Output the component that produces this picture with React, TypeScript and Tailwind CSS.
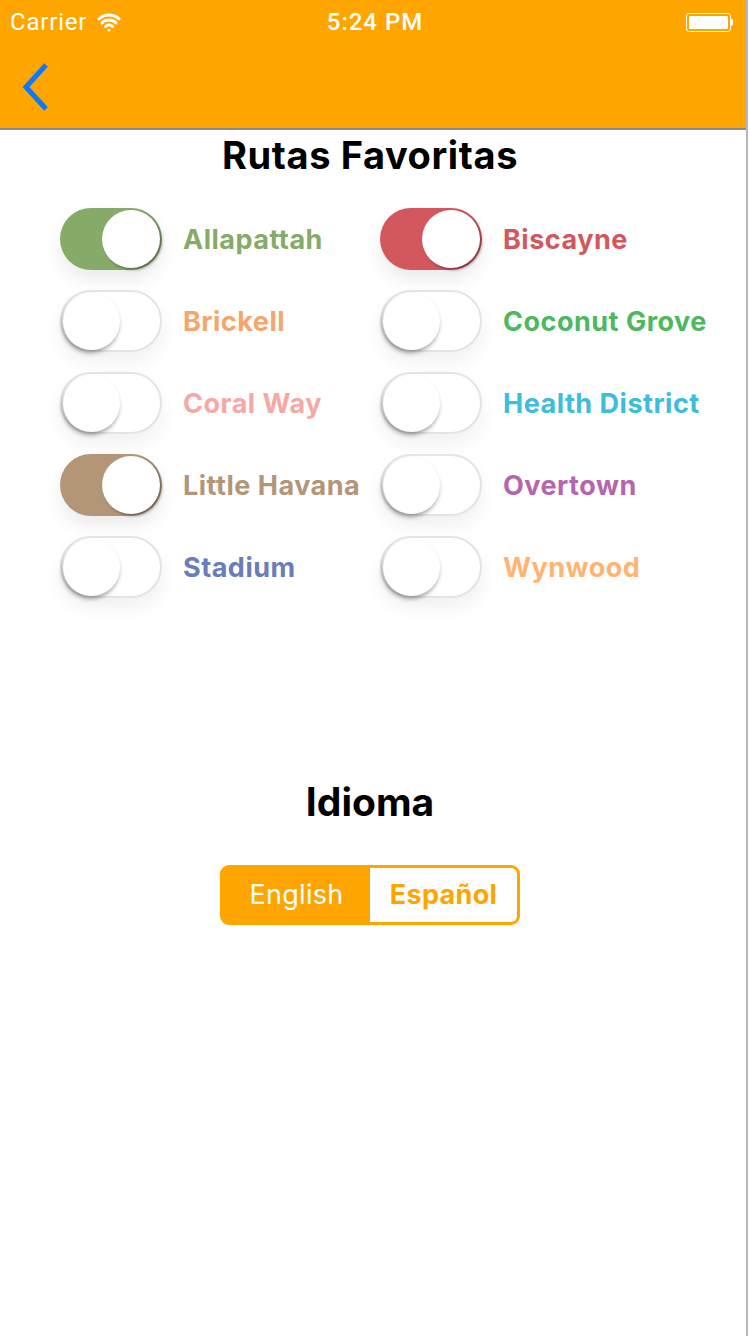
import { Wifi } from 'lucide-react';

type Route = { name: string; color: string; on?: boolean };

const routes: Route[] = [
  { name: 'Allapattah',      color: '#86ab69', on: true },
  { name: 'Biscayne',        color: '#d2585e', on: true },
  { name: 'Brickell',        color: '#f6a66b' },
  { name: 'Coconut Grove',   color: '#4db85f' },
  { name: 'Coral Way',       color: '#f6a8a4' },
  { name: 'Health District', color: '#3dbcdc' },
  { name: 'Little Havana',   color: '#b39578', on: true },
  { name: 'Overtown',        color: '#b565ad' },
  { name: 'Stadium',         color: '#6a7db8' },
  { name: 'Wynwood',         color: '#ffb571' },
];

function Toggle({ on, color }: { on?: boolean; color: string }) {
  if (on) {
    return (
      <div
        className="relative h-[62px] w-[102px] shrink-0 rounded-full shadow-[0_10px_18px_rgba(0,0,0,0.08)]"
        style={{ backgroundColor: color }}
      >
        <div className="absolute right-[2px] top-[2px] h-[58px] w-[58px] rounded-full bg-white shadow-[2px_2px_3px_rgba(0,0,0,0.35)]" />
      </div>
    );
  }
  return (
    <div className="relative h-[62px] w-[102px] shrink-0 rounded-full border-2 border-[#e4e4e4] bg-white shadow-[0_10px_18px_rgba(0,0,0,0.06)]">
      <div className="absolute left-[1px] top-[1px] h-[57px] w-[57px] rounded-full bg-white shadow-[-1px_3px_4px_rgba(0,0,0,0.35)]" />
    </div>
  );
}

export default function App() {
  return (
    <div className="h-[1336px] w-[750px] overflow-hidden bg-white font-['Inter',sans-serif]">
      <div className="h-full w-[748px] border-r-2 border-[#b8b8b8] bg-white">
        <div className="h-[130px] border-b-2 border-[#8a8a8a] bg-[#ffa500]">
          <div className="relative flex h-[44px] items-center px-[10px] text-white">
            <span className="font-['Roboto',sans-serif] text-[24px] leading-none tracking-[0.8px]">Carrier</span>
            <Wifi className="ml-[10px]" size={24} strokeWidth={3} />
            <span className="absolute left-0 w-[750px] text-center font-['Roboto',sans-serif] text-[24px] font-medium leading-none tracking-[1px]">
              5:24 PM
            </span>
            <div className="ml-auto mr-[3px] flex items-center">
              <div className="h-[19px] w-[45px] rounded-[3px] border border-white p-[2px]">
                <div className="h-full w-full rounded-[1px] bg-white" />
              </div>
              <div className="h-[7px] w-[2px] rounded-r-sm bg-white" />
            </div>
          </div>
          <div className="flex h-[84px] items-center px-[16px]">
            <svg width="40" height="50" viewBox="0 0 40 50">
              <path d="M30 4 L10 26 L30 48" fill="none" stroke="#0a7aff" strokeWidth="5" />
            </svg>
          </div>
        </div>

        <div className="w-[740px]">
          <h1 className="mt-[2px] text-center text-[38px] font-bold leading-[46px] tracking-[0.6px] text-black">
            Rutas Favoritas
          </h1>

          <div className="mt-[30px] grid grid-cols-[320px_320px] gap-y-[20px] pl-[60px]">
            {routes.map(r => (
              <div key={r.name} className="flex items-center">
                <Toggle on={r.on} color={r.color} />
                <span
                  className="ml-[21px] mt-[2px] whitespace-nowrap text-[27px] font-bold leading-[32px] tracking-[0.5px]"
                  style={{ color: r.color }}
                >
                  {r.name}
                </span>
              </div>
            ))}
          </div>

          <h2 className="mt-[181px] text-center text-[39px] font-bold leading-[46px] text-black">Idioma</h2>

          <div className="mt-[40px] flex justify-center">
            <div className="flex h-[60px] w-[300px] overflow-hidden rounded-[9px] border-[3px] border-[#ffa500] bg-[#ffa500]">
              <div className="flex flex-1 items-center justify-center text-[27px] tracking-[0.3px] text-white">English</div>
              <div className="flex flex-1 items-center justify-center bg-white text-[27px] font-bold tracking-[0.3px] text-[#ffa500]">
                Español
              </div>
            </div>
          </div>
        </div>
      </div>
    </div>
  );
}
